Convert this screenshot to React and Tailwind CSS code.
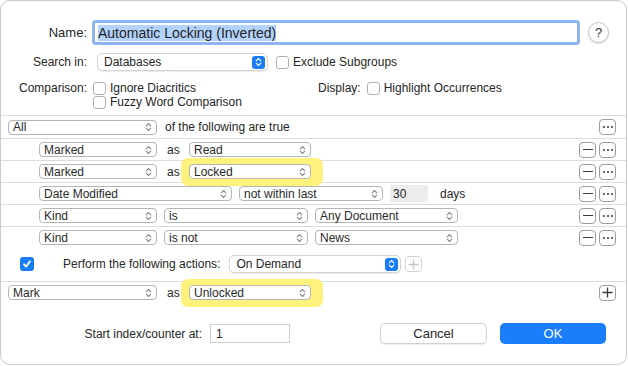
import React from "react";

const Chevrons = ({ color = "#8a8a8a" }) => (
  <svg width="7" height="10" viewBox="0 0 7 10" fill="none" stroke={color} strokeWidth="1.1" strokeLinecap="round" strokeLinejoin="round">
    <path d="M1.2 3.8 3.5 1.5 5.8 3.8" />
    <path d="M1.2 6.2 3.5 8.5 5.8 6.2" />
  </svg>
);

const Popup = ({ label, w }) => (
  <div className={`flex h-[15px] items-center justify-between rounded-[4px] border border-[#b5b5b5] bg-white pl-[4px] pr-[4px] ${w}`}>
    <span className="text-[12px] leading-none text-[#2a2a2a]">{label}</span>
    <Chevrons />
  </div>
);

const Highlight = ({ children }) => (
  <div className="relative">
    <div className="absolute -bottom-[7px] -left-[8px] -right-[12px] -top-[6px] rounded-[7px] bg-[#fdf27c]" />
    <div className="relative">{children}</div>
  </div>
);

const SmallBtn = ({ children, disabled }) => (
  <div className={`flex h-[16px] w-[17px] items-center justify-center rounded-[4px] border bg-white ${disabled ? "border-[#d4d4d4]" : "border-[#9d9d9d]"}`}>
    {children}
  </div>
);

const Minus = () => <div className="h-[1.5px] w-[10px] bg-[#3a3a3a]" />;
const Dots = () => (
  <div className="flex gap-[2px]">
    <div className="h-[2px] w-[2px] rounded-full bg-[#333]" />
    <div className="h-[2px] w-[2px] rounded-full bg-[#333]" />
    <div className="h-[2px] w-[2px] rounded-full bg-[#333]" />
  </div>
);
const Plus = ({ color = "#3a3a3a" }) => (
  <svg width="11" height="11" viewBox="0 0 11 11" stroke={color} strokeWidth="1.3">
    <path d="M5.5 0.5v10M0.5 5.5h10" />
  </svg>
);

const Checkbox = ({ checked }) =>
  checked ? (
    <div className="flex h-[14px] w-[14px] items-center justify-center rounded-[3px] bg-[#1a7cf7]">
      <svg width="10" height="10" viewBox="0 0 10 10" fill="none" stroke="white" strokeWidth="1.8" strokeLinecap="round" strokeLinejoin="round">
        <path d="M2 5.3 4.1 7.6 8 2.3" />
      </svg>
    </div>
  ) : (
    <div className="h-[13px] w-[13px] rounded-[3px] border border-[#b0b0b0] bg-white" />
  );

const RowButtons = ({ minus = true }) => (
  <div className="ml-auto flex gap-[3px]">
    {minus && (
      <SmallBtn>
        <Minus />
      </SmallBtn>
    )}
    <SmallBtn>
      <Dots />
    </SmallBtn>
  </div>
);

const Row = ({ children, first, buttons }) => (
  <div className={`flex h-[22px] items-center pr-[10px] ${first ? "" : "border-t border-[#dcdcdc]"}`}>
    {children}
    {buttons}
  </div>
);

const As = () => <span className="mx-[10px] w-[12px] text-[12px] text-[#2a2a2a]">as</span>;

export default function App() {
  return (
    <div className="h-[366px] w-[628px] bg-white" style={{ fontFamily: "'Liberation Sans', Arial, sans-serif" }}>
      <div className="flex h-[365px] w-[627px] flex-col rounded-[10px] border border-[#c9c9c9] bg-white text-[#262626]">
        {/* Name */}
        <div className="mt-[19px] flex items-center">
          <div className="w-[86px] text-right text-[13px]">Name:</div>
          <div className="ml-[5px] flex h-[25px] w-[488px] items-center rounded-[4px] border-[3px] border-[#8db4f5] bg-white pl-[3px]">
            <span className="bg-[#b3d3fc] text-[14px] leading-[16px] text-[#1f1f1f]">Automatic Locking (Inverted)</span>
          </div>
          <div className="ml-[8px] flex h-[21px] w-[21px] items-center justify-center rounded-full border border-[#c4c4c4] bg-white text-[13px] font-medium text-[#333] shadow-[0_1px_1px_rgba(0,0,0,0.12)]">?</div>
        </div>

        {/* Search in */}
        <div className="mt-[8px] flex items-center">
          <div className="w-[86px] text-right text-[12px]">Search in:</div>
          <div className="ml-[10px] flex h-[18px] w-[171px] items-center justify-between rounded-[5px] border border-[#d3d3d3] bg-white pl-[6px] pr-[2px] shadow-[0_1px_1px_rgba(0,0,0,0.08)]">
            <span className="text-[12px] leading-none">Databases</span>
            <div className="flex h-[13px] w-[13px] items-center justify-center rounded-[3px] bg-[#1a7cf7]">
              <Chevrons color="white" />
            </div>
          </div>
          <div className="ml-[8px]">
            <Checkbox />
          </div>
          <span className="ml-[4px] text-[12px]">Exclude Subgroups</span>
        </div>

        {/* Comparison / Display */}
        <div className="mt-[10px] flex">
          <div className="w-[86px] text-right text-[12px] leading-[14px]">Comparison:</div>
          <div className="ml-[6px] flex w-[219px] flex-col gap-[0px]">
            <div className="flex h-[14px] items-center gap-[4px]">
              <Checkbox />
              <span className="text-[12px]">Ignore Diacritics</span>
            </div>
            <div className="flex h-[14px] items-center gap-[4px]">
              <Checkbox />
              <span className="text-[12px]">Fuzzy Word Comparison</span>
            </div>
          </div>
          <div className="ml-[6px] flex h-[14px] items-center">
            <span className="text-[12px]">Display:</span>
            <div className="ml-[6px]">
              <Checkbox />
            </div>
            <span className="ml-[4px] text-[12px]">Highlight Occurrences</span>
          </div>
        </div>

        {/* Rules */}
        <div className="mt-[6px] border-t border-[#dcdcdc]">
          <Row first buttons={<RowButtons minus={false} />}>
            <div className="ml-[7px]">
              <Popup label="All" w="w-[149px]" />
            </div>
            <span className="ml-[8px] text-[12px]">of the following are true</span>
          </Row>
          <Row buttons={<RowButtons />}>
            <div className="ml-[38px]">
              <Popup label="Marked" w="w-[118px]" />
            </div>
            <As />
            <Popup label="Read" w="w-[122px]" />
          </Row>
          <Row buttons={<RowButtons />}>
            <div className="ml-[38px]">
              <Popup label="Marked" w="w-[118px]" />
            </div>
            <As />
            <Highlight>
              <Popup label="Locked" w="w-[122px]" />
            </Highlight>
          </Row>
          <Row buttons={<RowButtons />}>
            <div className="ml-[38px]">
              <Popup label="Date Modified" w="w-[193px]" />
            </div>
            <div className="ml-[7px]">
              <Popup label="not within last" w="w-[144px]" />
            </div>
            <div className="ml-[7px] flex h-[17px] w-[38px] items-center bg-[#ececec] pl-[3px] text-[12px]">30</div>
            <span className="ml-[12px] text-[12px]">days</span>
          </Row>
          <Row buttons={<RowButtons />}>
            <div className="ml-[38px]">
              <Popup label="Kind" w="w-[118px]" />
            </div>
            <div className="ml-[7px]">
              <Popup label="is" w="w-[144px]" />
            </div>
            <div className="ml-[7px]">
              <Popup label="Any Document" w="w-[143px]" />
            </div>
          </Row>
          <Row buttons={<RowButtons />}>
            <div className="ml-[38px]">
              <Popup label="Kind" w="w-[118px]" />
            </div>
            <div className="ml-[7px]">
              <Popup label="is not" w="w-[144px]" />
            </div>
            <div className="ml-[7px]">
              <Popup label="News" w="w-[143px]" />
            </div>
          </Row>
        </div>

        {/* Perform actions */}
        <div className="mt-[7px] flex h-[18px] items-center">
          <div className="ml-[19px]">
            <Checkbox checked />
          </div>
          <span className="ml-[29px] text-[12px]">Perform the following actions:</span>
          <div className="ml-[9px] flex h-[18px] w-[172px] items-center justify-between rounded-[5px] border border-[#d3d3d3] bg-white pl-[6px] pr-[2px] shadow-[0_1px_1px_rgba(0,0,0,0.08)]">
            <span className="text-[12px] leading-none">On Demand</span>
            <div className="flex h-[13px] w-[13px] items-center justify-center rounded-[3px] bg-[#1a7cf7]">
              <Chevrons color="white" />
            </div>
          </div>
          <div className="ml-[4px]">
            <SmallBtn disabled>
              <Plus color="#c4c4c4" />
            </SmallBtn>
          </div>
        </div>

        {/* Action row */}
        <div className="mt-[8px] flex h-[22px] items-center border-t border-[#dcdcdc] pr-[10px]">
          <div className="ml-[7px]">
            <Popup label="Mark" w="w-[149px]" />
          </div>
          <As />
          <Highlight>
            <Popup label="Unlocked" w="w-[122px]" />
          </Highlight>
          <div className="ml-auto">
            <SmallBtn>
              <Plus />
            </SmallBtn>
          </div>
        </div>

        {/* Footer */}
        <div className="mt-[20px] flex items-center">
          <span className="w-[201px] text-right text-[12px]">Start index/counter at:</span>
          <div className="ml-[8px] flex h-[19px] w-[80px] items-center border border-[#cfcfcf] bg-white pl-[5px] text-[12px]">1</div>
          <div className="ml-[90px] flex h-[21px] w-[107px] items-center justify-center rounded-[5px] border border-[#d0d0d0] bg-white text-[13px] shadow-[0_1px_1px_rgba(0,0,0,0.08)]">Cancel</div>
          <div className="ml-[13px] flex h-[21px] w-[106px] items-center justify-center rounded-[5px] bg-[#1a7efb] text-[13px] text-white">OK</div>
        </div>
      </div>
    </div>
  );
}
